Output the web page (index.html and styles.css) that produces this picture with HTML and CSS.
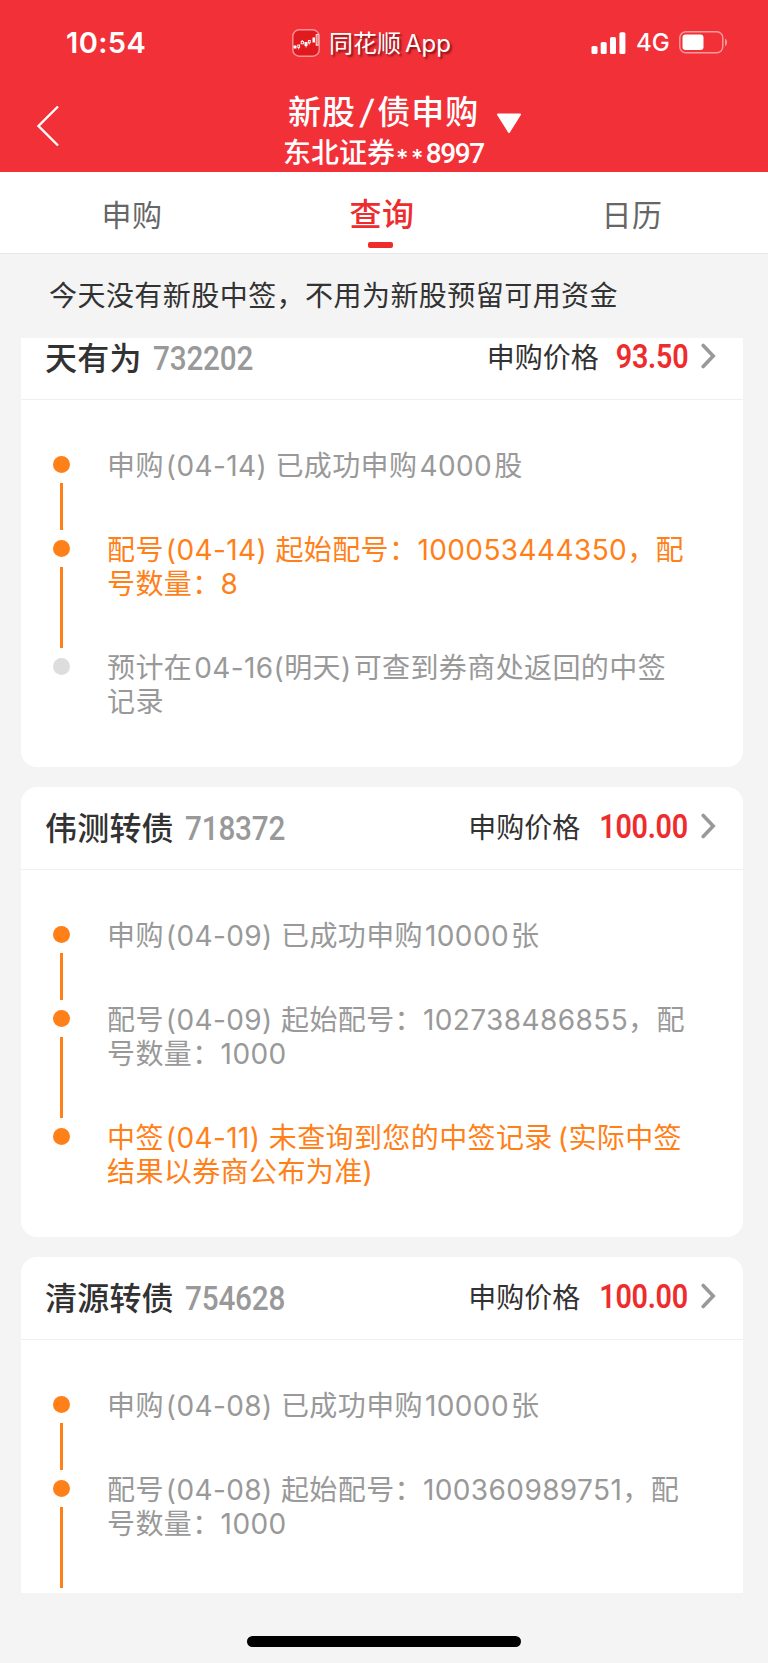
FILE: index.html
```
<!DOCTYPE html>
<html lang="zh-CN">
<head>
    <meta charset="UTF-8">
    <meta name="viewport" content="width=device-width, initial-scale=1.0">
    <title>新股/债申购</title>
    <link rel="stylesheet" href="styles.css">
</head>
<body>
    <header class="header">
        <div class="status-bar">
            <div class="status-time">10:54</div>
            <div class="status-app">
                <svg class="app-icon" width="28" height="28" viewBox="0 0 28 28">
                    <rect x="0.8" y="0.8" width="26.4" height="26.4" rx="6.5" fill="#e01a1e" stroke="#f79295" stroke-width="1.4"/>
                    <g fill="#fff">
                        <rect x="1.5" y="16.5" width="3" height="3"/>
                        <rect x="12.5" y="13" width="3" height="4"/>
                        <rect x="20.5" y="8.5" width="2.5" height="5"/>
                    </g>
                    <g fill="none" stroke="#fff" stroke-width="0.9">
                        <rect x="5.8" y="16" width="1.8" height="2.4"/>
                        <path d="M6.7 18.4v2M10.2 11v1.4M14 17v1.5M17.2 14v1.6"/>
                        <rect x="9.2" y="12.4" width="2.2" height="2.4"/>
                        <rect x="16.4" y="11.4" width="1.8" height="2.4"/>
                        <rect x="24.2" y="5.6" width="1.8" height="10.6"/>
                    </g>
                </svg>
                <span class="app-name">同花顺<span class="app-latin">App</span></span>
            </div>
            <div class="status-icons">
                <svg width="35" height="22" viewBox="0 0 35 22" fill="#fff">
                    <rect x="0.5" y="14" width="6" height="8" rx="1.6"/>
                    <rect x="9.7" y="10" width="6" height="12" rx="1.6"/>
                    <rect x="19" y="5" width="6" height="17" rx="1.6"/>
                    <rect x="28.4" y="0.2" width="6" height="21.8" rx="1.6"/>
                </svg>
                <span class="network">4G</span>
                <svg width="49" height="23" viewBox="0 0 49 23">
                    <rect x="0.8" y="0.8" width="43" height="21" rx="6" fill="none" stroke="#f8999c" stroke-width="1.5"/>
                    <rect x="3.5" y="3.5" width="21" height="15.6" rx="3" fill="#fff"/>
                    <path d="M46 7.5c2.8 1.6 2.8 6 0 7.6z" fill="#f8999c"/>
                </svg>
            </div>
        </div>
        <div class="nav-bar">
            <svg class="back" width="24" height="44" viewBox="0 0 24 44" fill="none" stroke="#fff" stroke-width="2.4">
                <path d="M22 2.5L2.5 22L22 41.5"/>
            </svg>
            <div class="nav-title">
                <div class="title-row">
                    <h1 class="title">新股<span class="slash">/</span>债申购</h1>
                    <svg class="caret" width="26" height="21" viewBox="0 0 26 21">
                        <path d="M2 1.5h22L13 19z" fill="#fff" stroke="#fff" stroke-width="2" stroke-linejoin="round"/>
                    </svg>
                </div>
                <div class="account">东北证券<span class="mask">**</span><span class="account-no">8997</span></div>
            </div>
        </div>
    </header>

    <nav class="tabs">
        <div class="tab">申购</div>
        <div class="tab active">查询</div>
        <div class="tab">日历</div>
    </nav>

    <div class="notice">今天没有新股中签，不用为新股预留可用资金</div>

    <main class="list">
        <section class="card">
            <div class="card-head">
                <span class="name">天有为</span>
                <span class="code">732202</span>
                <span class="price-label">申购价格</span>
                <span class="price">93.50</span>
                <svg class="arrow" width="15" height="26" viewBox="0 0 15 26"><path d="M2.2 2.5L12.2 13L2.2 23.5"/></svg>
            </div>
            <div class="steps">
                <div class="step">
                    <div class="marker"><i class="dot"></i><i class="line"></i></div>
                    <p class="step-text">申购<span class="num">(04-14) </span>已成功申购<span class="num">4000</span>股</p>
                </div>
                <div class="step current">
                    <div class="marker"><i class="dot"></i><i class="line"></i></div>
                    <p class="step-text">配号<span class="num">(04-14) </span>起始配号：100053444350，配<br>号数量：8</p>
                </div>
                <div class="step pending">
                    <div class="marker"><i class="dot"></i></div>
                    <p class="step-text">预计在<span class="num">04-16</span>(明天<span class="num-end">)</span>可查到券商处返回的中签<br>记录</p>
                </div>
            </div>
        </section>

        <section class="card">
            <div class="card-head">
                <span class="name">伟测转债</span>
                <span class="code">718372</span>
                <span class="price-label">申购价格</span>
                <span class="price">100.00</span>
                <svg class="arrow" width="15" height="26" viewBox="0 0 15 26"><path d="M2.2 2.5L12.2 13L2.2 23.5"/></svg>
            </div>
            <div class="steps">
                <div class="step">
                    <div class="marker"><i class="dot"></i><i class="line"></i></div>
                    <p class="step-text">申购<span class="num">(04-09) </span>已成功申购<span class="num">10000</span>张</p>
                </div>
                <div class="step">
                    <div class="marker"><i class="dot"></i><i class="line"></i></div>
                    <p class="step-text">配号<span class="num">(04-09) </span>起始配号：102738486855，配<br>号数量：1000</p>
                </div>
                <div class="step current">
                    <div class="marker"><i class="dot"></i></div>
                    <p class="step-text">中签<span class="num">(04-11) </span>未查询到您的中签记录<span class="paren">(</span>实际中签<br>结果以券商公布为准)</p>
                </div>
            </div>
        </section>

        <section class="card">
            <div class="card-head">
                <span class="name">清源转债</span>
                <span class="code">754628</span>
                <span class="price-label">申购价格</span>
                <span class="price">100.00</span>
                <svg class="arrow" width="15" height="26" viewBox="0 0 15 26"><path d="M2.2 2.5L12.2 13L2.2 23.5"/></svg>
            </div>
            <div class="steps">
                <div class="step">
                    <div class="marker"><i class="dot"></i><i class="line"></i></div>
                    <p class="step-text">申购<span class="num">(04-08) </span>已成功申购<span class="num">10000</span>张</p>
                </div>
                <div class="step">
                    <div class="marker"><i class="dot"></i><i class="line"></i></div>
                    <p class="step-text">配号<span class="num">(04-08) </span>起始配号：100360989751，配<br>号数量：1000</p>
                </div>
            </div>
        </section>
    </main>

    <footer class="footer">
        <div class="home-bar"></div>
    </footer>
</body>
</html>
```
FILE: styles.css
```
* {
    margin: 0;
    padding: 0;
    box-sizing: border-box;
}

body {
    width: 768px;
    height: 1663px;
    overflow: hidden;
    display: flex;
    flex-direction: column;
    background: #f4f4f4;
    color: #323232;
    font-family: Inter, 'Noto Sans CJK SC', sans-serif;
}

svg {
    display: block;
    flex: none;
}

/* header */
.header {
    height: 172px;
    flex: none;
    background: #f23038;
    color: #fff;
}

.status-bar {
    height: 86px;
    padding: 0 40px 0 66px;
    display: flex;
    align-items: center;
}

.status-time {
    width: 226px;
    padding-bottom: 2px;
    font-size: 29px;
    font-weight: 600;
    letter-spacing: 0.4px;
}

.status-app {
    display: flex;
    align-items: center;
    gap: 9px;
}

.app-name {
    padding-top: 1px;
    font-size: 24px;
    line-height: 30px;
    white-space: nowrap;
    text-shadow: 2px 2px 2px rgba(60, 0, 0, 0.6);
}

.app-latin {
    margin-left: 4px;
}

.status-icons {
    margin-left: auto;
    padding-bottom: 1px;
    display: flex;
    align-items: center;
}

.network {
    width: 53px;
    padding-left: 10px;
    font-size: 24px;
    font-weight: 500;
}

.nav-bar {
    height: 86px;
    padding-left: 36px;
    display: flex;
}

.back {
    margin-top: 18px;
}

.nav-title {
    margin-left: 223px;
}

.title-row {
    height: 51px;
    padding: 1px 0 0 5px;
    display: flex;
    align-items: center;
}

.title {
    font-size: 33px;
    font-weight: 500;
    line-height: 50px;
    letter-spacing: 1px;
    white-space: nowrap;
}

.slash {
    display: inline-block;
    margin: 0 3px 0 5px;
    transform: skewX(-8deg);
}

.caret {
    margin: 23px 0 0 17px;
}

.account {
    font-size: 28px;
    line-height: 32px;
    font-weight: 500;
    white-space: nowrap;
}

.mask {
    padding-left: 1px;
    font-size: 24px;
    letter-spacing: 2.4px;
    vertical-align: -4px;
    line-height: 1;
}

.account-no {
    font-family: Roboto, sans-serif;
    letter-spacing: -1.4px;
}

/* tabs */
.tabs {
    height: 82px;
    flex: none;
    padding: 0 11px 0 7px;
    display: flex;
    background: #fff;
    border-bottom: 1px solid #e6e6e6;
}

.tab {
    flex: 1;
    display: flex;
    flex-direction: column;
    align-items: center;
    font-size: 30px;
    line-height: 86px;
    letter-spacing: 0.6px;
    color: #666;
}

.tab.active {
    font-size: 32px;
    font-weight: 500;
    color: #ee2c2e;
}

.tab.active::after {
    content: '';
    width: 25px;
    height: 6px;
    margin: -16px 3px 0 0;
    border-radius: 2px;
    background: #ee2c2e;
}

.notice {
    height: 84px;
    flex: none;
    padding-left: 49px;
    font-size: 28px;
    letter-spacing: 0.45px;
    line-height: 84px;
    white-space: nowrap;
}

/* subscription cards */
.list {
    height: 1255px;
    flex: none;
    padding: 0 25px 0 21px;
    overflow: hidden;
}

.card {
    height: 450px;
    margin-bottom: 20px;
    border-radius: 16px;
    background: #fff;
}

/* the list is scrolled a little under the notice */
.card:first-child {
    margin-top: -21px;
}

.card:last-child {
    margin-bottom: 0;
}

.card-head {
    height: 83px;
    padding: 0 27px 0 24px;
    display: flex;
    align-items: center;
    border-bottom: 1px solid #f0f0f0;
}

.name {
    padding-bottom: 4px;
    font-size: 32px;
    font-weight: 500;
    letter-spacing: 0.2px;
}

.code,
.price {
    font-family: Roboto, sans-serif;
    font-size: 33px;
    font-weight: 500;
}

/* narrow digits */
.code {
    margin-left: 11px;
    color: #999;
    letter-spacing: -0.2px;
    transform: scaleX(0.9);
    transform-origin: left;
}

.price-label {
    margin-left: auto;
    padding-bottom: 5px;
    font-size: 28px;
}

.price {
    margin-left: 6px;
    padding-bottom: 3px;
    font-weight: 600;
    letter-spacing: -0.3px;
    color: #ee2c2e;
    transform: scaleX(0.87);
    transform-origin: right;
}

.arrow {
    margin: 0 0 4px 13px;
    fill: none;
    stroke: #999;
    stroke-width: 3.6;
    stroke-linecap: round;
}

.steps {
    padding: 49px 0 0 32px;
}

.step {
    display: flex;
    color: #999;
}

.step.current {
    color: #ff7f19;
}

.marker {
    width: 17px;
    padding: 7px 0 3px;
    display: flex;
    flex-direction: column;
    align-items: center;
}

.dot {
    width: 17px;
    height: 17px;
    border-radius: 50%;
    background: #ff7f19;
}

.pending .dot {
    background: #ddd;
}

.line {
    width: 3px;
    flex: 1;
    margin-top: 10px;
    background: #ff7f19;
}

.step-text {
    margin-left: 37px;
    padding-bottom: 50px;
    font-size: 28px;
    line-height: 34px;
    letter-spacing: 0.4px;
    white-space: nowrap;
}

/* small gap between Chinese text and digits */
.num {
    margin-left: 2px;
}

.num-end,
.num:not(:first-child) {
    margin-right: 2px;
}

.paren {
    margin-left: 5px;
}

.footer {
    flex: 1;
    display: flex;
    justify-content: center;
    align-items: flex-end;
    padding-bottom: 16px;
}

.home-bar {
    width: 274px;
    height: 11px;
    border-radius: 6px;
    background: #000;
}
```
